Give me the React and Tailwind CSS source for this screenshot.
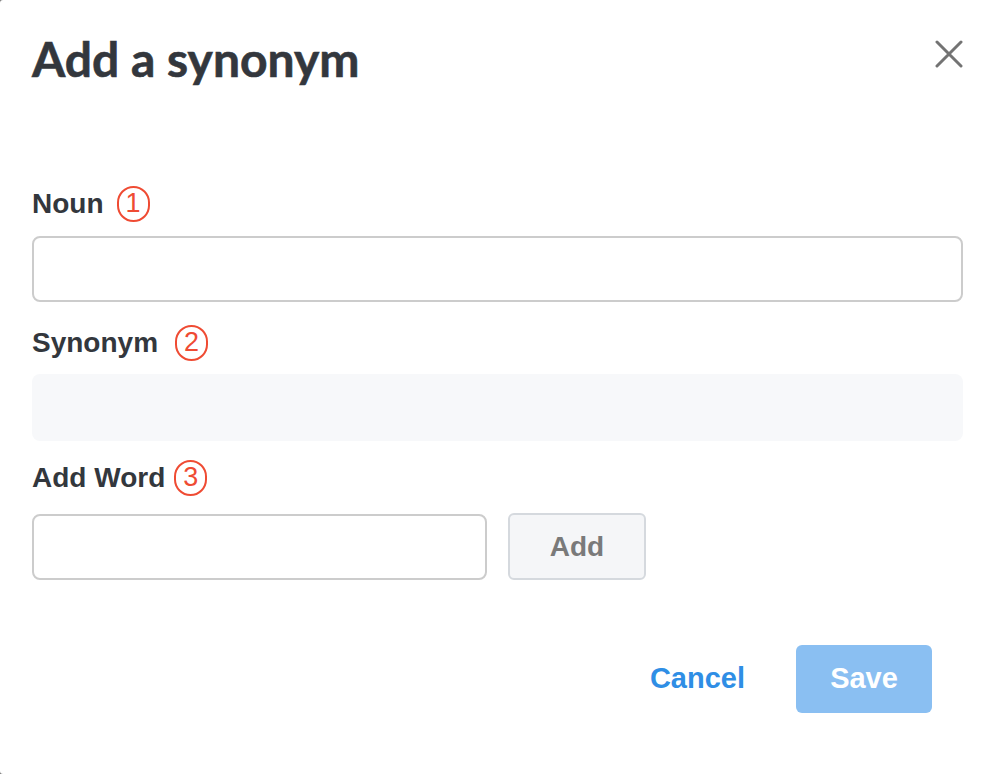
import React, { useState } from 'react';

const Step = ({ n, className = '' }) => (
  <span
    className={`inline-flex items-center justify-center w-[33px] h-[36px] rounded-full border-2 border-[#ef4b33] text-[#ef4b33] text-[27px] leading-none font-normal ${className}`}
    style={{ fontFamily: '"Liberation Sans", Arial, sans-serif' }}
  >
    {n}
  </span>
);

const Label = ({ children, step, stepGap, className = '' }) => (
  <div className={`flex items-center h-[27px] ${className}`}>
    <span className="text-[28px] leading-[27px] font-bold text-[#33373d]">{children}</span>
    <Step n={step} className={stepGap} />
  </div>
);

const AddSynonymModal = () => {
  const [noun, setNoun] = useState('');
  const [word, setWord] = useState('');

  return (
    <div className="w-[998px] h-[774px] bg-[#7b7b7b]">
      <div
        className="w-full h-full bg-white rounded-l-[3px] px-8 flex flex-col"
        style={{ fontFamily: '"Liberation Sans", Arial, sans-serif' }}
      >
        {/* Header */}
        <div className="flex justify-between items-start pt-[35px]">
          <h1
            className="text-[48px] leading-[48px] font-bold text-[#33373d]"
            style={{ fontFamily: 'Lato, "Noto Sans", sans-serif', WebkitTextStroke: '0.6px #33373d' }}
          >
            Add a synonym
          </h1>
          <button className="mt-[5px] mr-[3px] w-[28px] h-[28px] flex items-center justify-center">
            <svg width="28" height="28" viewBox="0 0 28 28" fill="none" stroke="#737373" strokeWidth="3" strokeLinecap="round">
              <path d="M2 2 L26 26 M26 2 L2 26" />
            </svg>
          </button>
        </div>

        {/* Noun */}
        <Label step="1" stepGap="ml-[13px]" className="mt-[107px]">Noun</Label>
        <input
          value={noun}
          onChange={(e) => setNoun(e.target.value)}
          className="mt-[19px] h-[66px] w-[931px] border-2 border-[#cccccc] rounded-[8px] px-4 text-[26px] outline-none"
        />

        {/* Synonym */}
        <Label step="2" stepGap="ml-[17px]" className="mt-[27px]">Synonym</Label>
        <div className="mt-[18px] h-[67px] w-[931px] bg-[#f7f8fa] rounded-[8px]" />

        {/* Add Word */}
        <Label step="3" stepGap="ml-[9px]" className="mt-[23px]">Add Word</Label>
        <div className="mt-[22px] flex items-center gap-[21px]">
          <input
            value={word}
            onChange={(e) => setWord(e.target.value)}
            className="h-[66px] w-[455px] border-2 border-[#cccccc] rounded-[8px] px-4 text-[26px] outline-none"
          />
          <button className="h-[67px] w-[138px] bg-[#f5f6f8] border-2 border-[#d5d9de] rounded-[6px] text-[28px] font-bold text-[#7a7a7a]">
            Add
          </button>
        </div>

        {/* Footer */}
        <div className="mt-[65px] flex justify-end items-center pr-[34px]">
          <button className="text-[29px] font-bold text-[#2f8ee5] mr-[51px]">Cancel</button>
          <button className="h-[68px] w-[136px] bg-[#8abff2] rounded-[6px] text-[29px] font-bold text-white">
            Save
          </button>
        </div>
      </div>
    </div>
  );
};

export default function App() {
  return <AddSynonymModal />;
}
